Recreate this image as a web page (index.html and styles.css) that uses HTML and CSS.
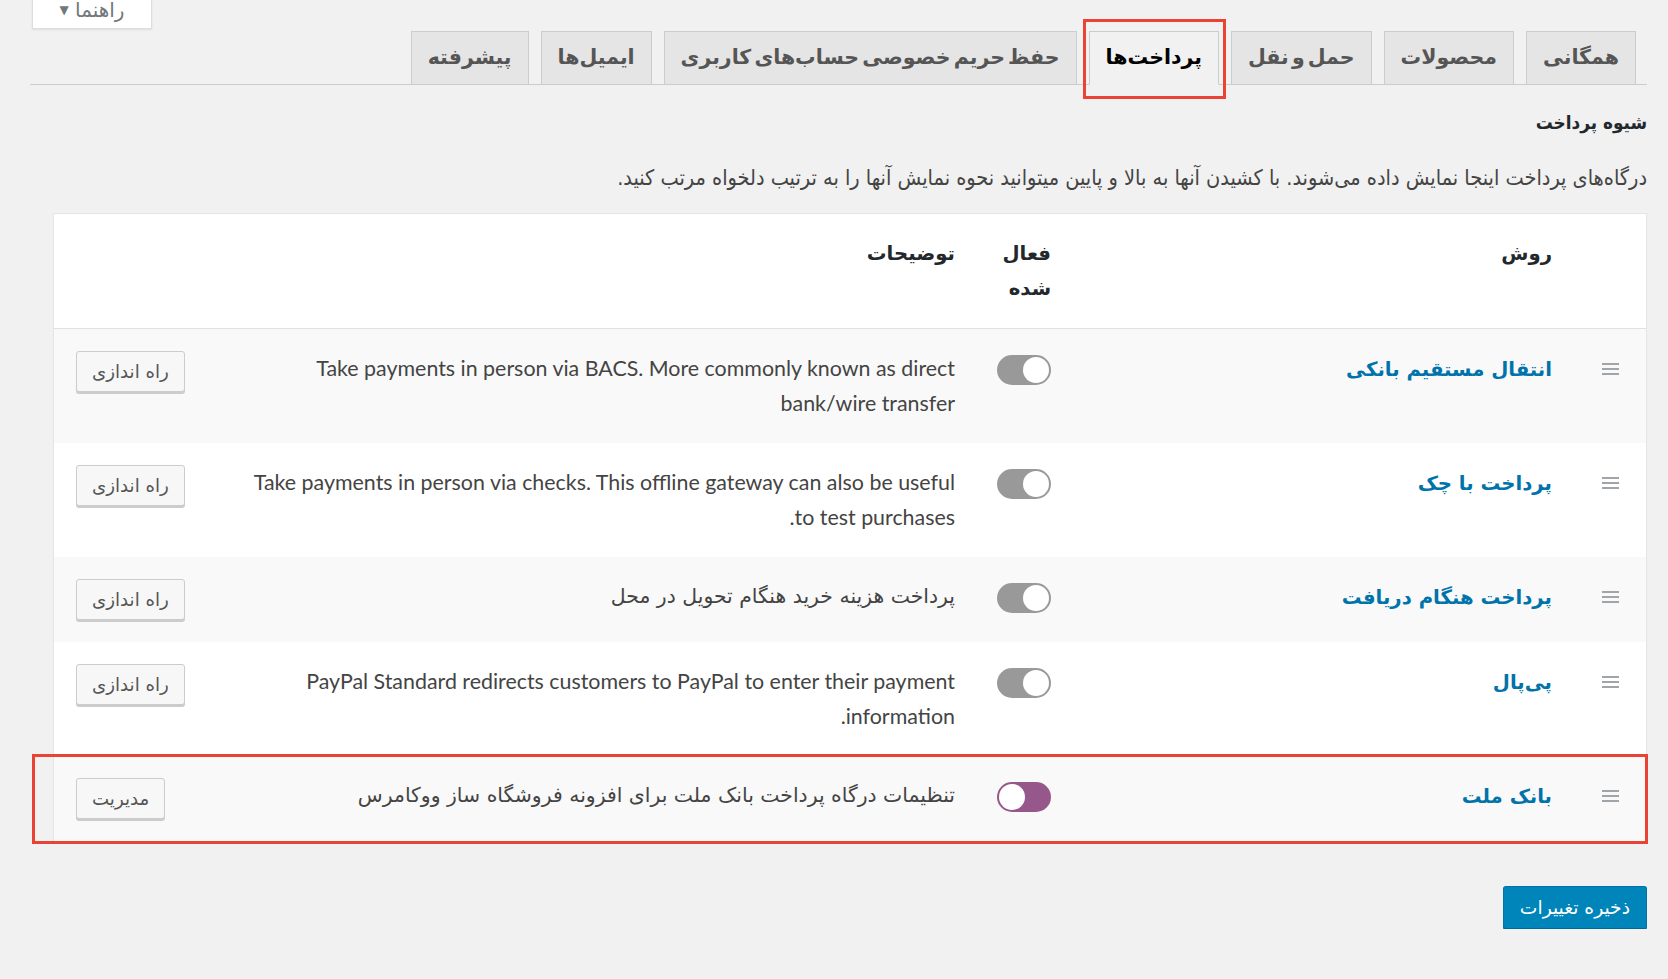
FILE: index.html
```html
<!DOCTYPE html>
<html lang="fa" dir="rtl">
<head>
    <meta charset="UTF-8">
    <meta name="viewport" content="width=device-width, initial-scale=1.0">
    <title>تنظیمات ووکامرس - پرداخت‌ها</title>
    <link rel="stylesheet" href="styles.css">
</head>
<body>
    <div class="help-bar">
        <div class="help-tab">راهنما <span class="arrow">▼</span></div>
    </div>

    <div class="wrap">
        <nav class="tabs">
            <a class="tab">همگانی</a>
            <a class="tab">محصولات</a>
            <a class="tab">حمل و نقل</a>
            <a class="tab active">پرداخت‌ها</a>
            <a class="tab">حفظ حریم خصوصی حساب‌های کاربری</a>
            <a class="tab">ایمیل‌ها</a>
            <a class="tab">پیشرفته</a>
        </nav>

        <h2 class="section-title">شیوه پرداخت</h2>
        <p class="section-desc">درگاه‌های پرداخت اینجا نمایش داده می‌شوند. با کشیدن آنها به بالا و پایین میتوانید نحوه نمایش آنها را به ترتیب دلخواه مرتب کنید.</p>

        <div class="gateways">
            <div class="gw-row gw-head">
                <div class="cell"></div>
                <div class="cell">روش</div>
                <div class="cell">فعال شده</div>
                <div class="cell">توضیحات</div>
                <div class="cell"></div>
            </div>

            <div class="gw-row alt">
                <div class="cell sort"><svg width="17" height="12" viewBox="0 0 17 12"><path d="M0 1h17M0 6h17M0 11h17" stroke="#a0a5aa" stroke-width="2"/></svg></div>
                <div class="cell name"><a href="#">انتقال مستقیم بانکی</a></div>
                <div class="cell"><span class="toggle"></span></div>
                <div class="cell desc en">Take payments in person via BACS. More commonly known as direct bank/wire transfer</div>
                <div class="cell action"><button class="btn">راه اندازی</button></div>
            </div>

            <div class="gw-row">
                <div class="cell sort"><svg width="17" height="12" viewBox="0 0 17 12"><path d="M0 1h17M0 6h17M0 11h17" stroke="#a0a5aa" stroke-width="2"/></svg></div>
                <div class="cell name"><a href="#">پرداخت با چک</a></div>
                <div class="cell"><span class="toggle"></span></div>
                <div class="cell desc en">Take payments in person via checks. This offline gateway can also be useful to test purchases.</div>
                <div class="cell action"><button class="btn">راه اندازی</button></div>
            </div>

            <div class="gw-row alt">
                <div class="cell sort"><svg width="17" height="12" viewBox="0 0 17 12"><path d="M0 1h17M0 6h17M0 11h17" stroke="#a0a5aa" stroke-width="2"/></svg></div>
                <div class="cell name"><a href="#">پرداخت هنگام دریافت</a></div>
                <div class="cell"><span class="toggle"></span></div>
                <div class="cell desc">پرداخت هزینه خرید هنگام تحویل در محل</div>
                <div class="cell action"><button class="btn">راه اندازی</button></div>
            </div>

            <div class="gw-row">
                <div class="cell sort"><svg width="17" height="12" viewBox="0 0 17 12"><path d="M0 1h17M0 6h17M0 11h17" stroke="#a0a5aa" stroke-width="2"/></svg></div>
                <div class="cell name"><a href="#">پی‌پال</a></div>
                <div class="cell"><span class="toggle"></span></div>
                <div class="cell desc en">PayPal Standard redirects customers to PayPal to enter their payment information.</div>
                <div class="cell action"><button class="btn">راه اندازی</button></div>
            </div>

            <div class="gw-row alt marked">
                <div class="cell sort"><svg width="17" height="12" viewBox="0 0 17 12"><path d="M0 1h17M0 6h17M0 11h17" stroke="#a0a5aa" stroke-width="2"/></svg></div>
                <div class="cell name"><a href="#">بانک ملت</a></div>
                <div class="cell"><span class="toggle on"></span></div>
                <div class="cell desc">تنظیمات درگاه پرداخت بانک ملت برای افزونه فروشگاه ساز ووکامرس</div>
                <div class="cell action"><button class="btn">مدیریت</button></div>
            </div>
        </div>

        <p class="submit"><button class="btn-primary">ذخیره تغییرات</button></p>
    </div>
</body>
</html>
```

FILE: styles.css
```css
body {
    margin: 0;
    background: #f1f1f1;
    color: #444;
    font-family: Lato, "DejaVu Sans", sans-serif;
}

.help-bar {
    height: 30px;
    display: flex;
    justify-content: flex-end;
    padding-left: 32px;
}

.help-tab {
    width: 120px;
    height: 29px;
    box-sizing: border-box;
    background: #fff;
    border: 1px solid #ddd;
    border-top: none;
    box-shadow: 0 1px 2px rgba(0, 0, 0, 0.08);
    color: #72777c;
    font-family: "DejaVu Sans", sans-serif;
    font-size: 20px;
    line-height: 20px;
    text-align: center;
}

.help-tab .arrow {
    font-size: 12px;
    vertical-align: 3px;
}

.wrap {
    padding: 0 21px 0 30px;
}

.tabs {
    display: flex;
    gap: 12px;
    padding-right: 11px;
    margin-top: 1px;
    border-bottom: 1px solid #ccc;
}

.tab {
    display: block;
    height: 52px;
    margin-bottom: -1px;
    padding: 0 16px;
    background: #e5e5e5;
    border: 1px solid #ccc;
    color: #555;
    font-family: "DejaVu Sans", sans-serif;
    font-weight: bold;
    font-size: 20.5px;
    word-spacing: -4px;
    line-height: 50px;
    white-space: nowrap;
}

.tab.active {
    position: relative;
    background: #f1f1f1;
    border-bottom-color: #f1f1f1;
    color: #000;
}

.tab.active::after {
    content: "";
    position: absolute;
    top: -13px;
    bottom: -15px;
    left: -7px;
    right: -8px;
    border: 3px solid #ea4335;
}

.section-title {
    margin: 27px 0 0;
    font-family: "DejaVu Sans Condensed", "DejaVu Sans", sans-serif;
    font-size: 18.8px;
    line-height: 22px;
    color: #23282d;
}

.section-desc {
    margin: 32px 0 0;
    font-family: "DejaVu Sans Condensed", "DejaVu Sans", sans-serif;
    font-size: 21.5px;
    line-height: 24px;
    color: #444;
}

.gateways {
    margin: 23px 0 0 23px;
    background: #fff;
    border: 1px solid #e5e5e5;
    box-shadow: 0 1px 1px rgba(0, 0, 0, 0.04);
}

.gw-row {
    display: grid;
    grid-template-columns: 72px 503px 94px 750px 1fr;
    background: #fff;
}

.gw-row.alt {
    background: #f9f9f9;
}

.gw-head {
    border-bottom: 1px solid #e1e1e1;
    font-family: "DejaVu Sans", sans-serif;
    font-weight: bold;
    color: #23282d;
}

.cell {
    padding: 22px 22px 22px 0;
    font-size: 19.7px;
    line-height: 35px;
}

.gw-row .cell:nth-child(3) {
    padding-right: 20px;
}

.sort {
    display: flex;
    justify-content: center;
    padding: 34px 0 0;
}

.name a {
    color: #0073aa;
    font-family: "DejaVu Sans", sans-serif;
    font-weight: bold;
    text-decoration: none;
}

.desc {
    padding-left: 12px;
    font-family: "DejaVu Sans", sans-serif;
    font-size: 20.4px;
}

.desc.en {
    font-family: Lato, "DejaVu Sans", sans-serif;
    font-size: 21.4px;
}

.toggle {
    display: block;
    position: relative;
    width: 54px;
    height: 30px;
    margin-top: 4px;
    border-radius: 15px;
    background: #999;
}

.toggle::after {
    content: "";
    position: absolute;
    top: 2px;
    right: 2px;
    width: 26px;
    height: 26px;
    border-radius: 50%;
    background: #fff;
}

.toggle.on {
    background: #96588a;
}

.toggle.on::after {
    right: auto;
    left: 2px;
}

.action {
    display: flex;
    justify-content: flex-end;
    align-items: flex-start;
    padding-left: 0;
    padding-right: 0;
}

.btn {
    height: 41px;
    margin-left: 22px;
    padding: 0 15px;
    background: #f7f7f7;
    border: 1px solid #ccc;
    border-radius: 3px;
    box-shadow: 0 2px 0 #ccc;
    color: #555;
    font-family: "DejaVu Sans", sans-serif;
    font-size: 18.2px;
}

.marked {
    position: relative;
}

.marked::after {
    content: "";
    position: absolute;
    top: -2px;
    bottom: -3px;
    left: -22px;
    right: -2px;
    border: 3px solid #ea4335;
}

.submit {
    margin: 44px 0 0;
}

.btn-primary {
    height: 43px;
    padding: 0 16px;
    background: #0085ba;
    border: 1px solid #0073aa;
    border-bottom-color: #006799;
    border-radius: 3px;
    box-shadow: 0 1px 0 #006799;
    color: #fff;
    font-family: "DejaVu Sans", sans-serif;
    font-size: 18.7px;
}
```
